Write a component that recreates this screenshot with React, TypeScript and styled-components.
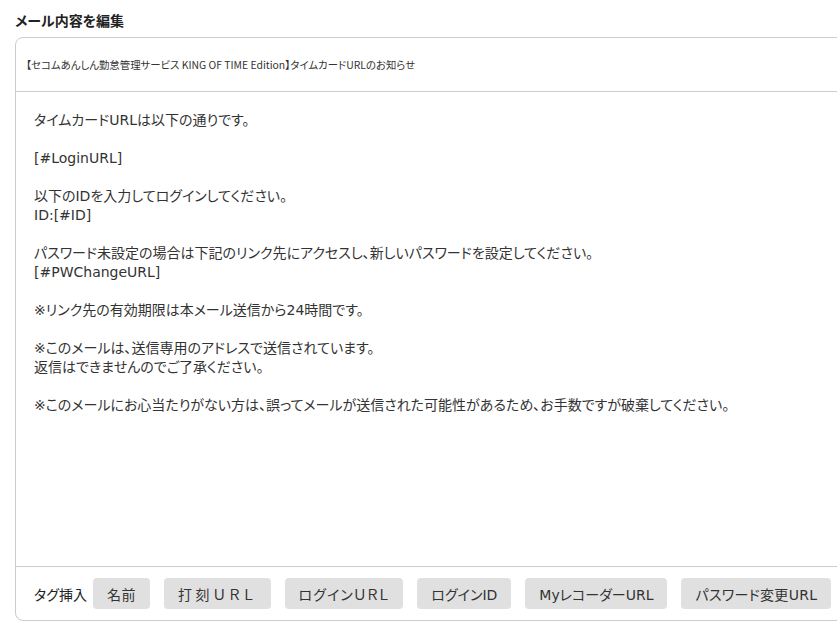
import styled, { createGlobalStyle } from "styled-components";

const GlobalStyle = createGlobalStyle`
	html, body {
		margin: 0;
		padding: 0;
		background: #ffffff;
		overflow: hidden;
	}
	body {
		font-family: "DejaVu Sans", "Noto Sans CJK JP", sans-serif;
		font-feature-settings: "palt";
		color: #333333;
	}
`;

const Page = styled.div`
	padding: 10px 0 0 15px;
	width: 860px;
`;

const Heading = styled.h2`
	margin: 0 0 7px 0;
	font-family: "Noto Sans CJK JP", sans-serif;
	font-size: 14px;
	font-weight: 700;
	line-height: 20px;
	color: #222222;
`;

const Card = styled.div`
	border: 1px solid #cccccc;
	border-radius: 8px;
	width: 840px;
	display: flex;
	flex-direction: column;
	height: 584px;
	box-sizing: border-box;
`;

const Subject = styled.div`
	height: 53px;
	display: flex;
	align-items: center;
	padding: 0 0 0 10px;
	font-family: "Noto Sans CJK JP", sans-serif;
	font-size: 10.4px;
	border-bottom: 1px solid #cccccc;
	color: #333333;
`;

const Body = styled.div`
	flex: 1;
	padding: 19px 18px;
	font-size: 14px;
	line-height: 19px;
	white-space: pre-wrap;
	border-bottom: 1px solid #cccccc;
	color: #333333;
`;

const Footer = styled.div`
	height: 53px;
	display: flex;
	align-items: center;
	padding: 0 18px;
	gap: 14px;
	font-size: 14px;
`;

const Label = styled.span`
	margin-right: -8px;
	white-space: nowrap;
	font-family: "Noto Sans CJK JP", sans-serif;
	color: #222222;
`;

const TagButton = styled.button<{ $spacing: number }>`
	flex-shrink: 0;
	white-space: nowrap;
	font-family: inherit;
	font-feature-settings: "palt";
	font-size: 14px;
	color: #333333;
	background: #e0e0e0;
	border: none;
	border-radius: 4px;
	height: 31px;
	padding: 0 14px;
	letter-spacing: ${(props) => props.$spacing}px;
	cursor: pointer;
`;

const bodyText = `タイムカードURLは以下の通りです。

[#LoginURL]

以下のIDを入力してログインしてください。
ID:[#ID]

パスワード未設定の場合は下記のリンク先にアクセスし、新しいパスワードを設定してください。
[#PWChangeURL]

※リンク先の有効期限は本メール送信から24時間です。

※このメールは、送信専用のアドレスで送信されています。
返信はできませんのでご了承ください。

※このメールにお心当たりがない方は、誤ってメールが送信された可能性があるため、お手数ですが破棄してください。`;

const tags = [
	{ label: "名前", spacing: 0.5 },
	{ label: "打刻ＵＲＬ", spacing: 3.6 },
	{ label: "ログインＵＲＬ", spacing: 1 },
	{ label: "ログインID", spacing: 0 },
	{ label: "MyレコーダーURL", spacing: 0 },
	{ label: "パスワード変更URL", spacing: 0.3 },
];

function App() {
	return (
		<Page>
			<GlobalStyle />
			<Heading>メール内容を編集</Heading>
			<Card>
				<Subject>【セコムあんしん勤怠管理サービス KING OF TIME Edition】タイムカードURLのお知らせ</Subject>
				<Body>{bodyText}</Body>
				<Footer>
					<Label>タグ挿入</Label>
					{tags.map((tag) => (
						<TagButton key={tag.label} $spacing={tag.spacing}>
							{tag.label}
						</TagButton>
					))}
				</Footer>
			</Card>
		</Page>
	);
}

export default App;
